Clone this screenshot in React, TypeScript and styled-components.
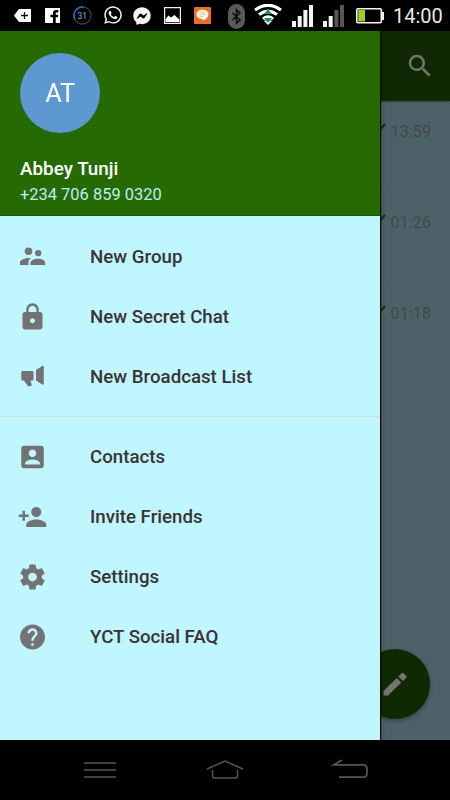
import React from "react";
import styled, { createGlobalStyle } from "styled-components";
import { MdLock, MdPersonAdd, MdHelp, MdSearch } from "react-icons/md";
import { FaWhatsapp, FaFacebookMessenger } from "react-icons/fa";

const GlobalStyle = createGlobalStyle`
  * { box-sizing: border-box; }
  body { margin: 0; background: #000; font-family: Roboto, "Noto Sans", sans-serif; }
  svg { display: block; flex: none; }
`;

const Phone = styled.div`
  width: 450px;
  height: 800px;
  display: flex;
  flex-direction: column;
  overflow: hidden;
  background: #000;
`;

const StatusBar = styled.header`
  height: 31px;
  flex: none;
  display: flex;
  align-items: flex-start;
`;

const StatusIcon = styled.span<{ $left: number; $top: number }>`
  flex: none;
  margin-left: ${(p) => p.$left}px;
  margin-top: ${(p) => p.$top}px;
  color: #f4f4f4;
`;

const Clock = styled.time`
  margin: 4px 0 0 9px;
  color: #e9e9e9;
  font-size: 20px;
  line-height: 25px;
  white-space: nowrap;
`;

const Screen = styled.main`
  flex: 1;
  position: relative;
  overflow: hidden;
  background: #4d6268;
`;

const Toolbar = styled.div`
  height: 70px;
  display: flex;
  align-items: center;
  justify-content: flex-end;
  padding-right: 15px;
  background: #0f2a02;
  color: #757575;
  box-shadow: 0 1px 2px rgba(0, 0, 0, 0.35);
`;

const ChatRow = styled.div<{ $line: boolean }>`
  height: 91px;
  display: flex;
  align-items: flex-start;
  justify-content: flex-end;
  gap: 5px;
  padding: 21px 19px 0 0;
  border-bottom: 1px solid ${(p) => (p.$line ? "#5a6063" : "transparent")};
  color: #434849;
  font-size: 16px;
  line-height: 20px;
  letter-spacing: 0.12px;
`;

const ComposeButton = styled.div`
  position: absolute;
  left: 360px;
  top: 618px;
  width: 70px;
  height: 70px;
  border-radius: 50%;
  display: flex;
  align-items: center;
  justify-content: center;
  background: #0f2a02;
  box-shadow: 0 2px 4px rgba(0, 0, 0, 0.35);
`;

const Drawer = styled.aside`
  position: absolute;
  inset: 0 auto 0 0;
  width: 380px;
  background: #bff6ff;
  box-shadow: 1px 0 1px rgba(0, 0, 0, 0.9), 2px 0 5px rgba(0, 0, 0, 0.2);
`;

const Profile = styled.div`
  height: 185px;
  padding: 22px 20px 0;
  background: #256a03;
  border-bottom: 1px solid #1b5900;
`;

const Avatar = styled.div`
  width: 80px;
  height: 80px;
  border-radius: 50%;
  display: flex;
  align-items: center;
  justify-content: center;
  background: #5d98d0;
  color: #fff;
  font-size: 25px;
`;

const ProfileName = styled.div`
  margin-top: 24px;
  color: #fff;
  font-size: 18.85px;
  font-weight: 500;
  line-height: 25px;
`;

const ProfilePhone = styled.div`
  color: #bdeef5;
  font-size: 16.45px;
  line-height: 26px;
`;

const MenuSection = styled.nav`
  padding: 11px 0 9px;
  & + & {
    padding-top: 10px;
    border-top: 1px solid #d3dcdd;
  }
`;

const MenuItem = styled.div`
  height: 60px;
  display: flex;
  align-items: center;
  gap: 42px;
  padding-left: 18px;
  color: #737373;
`;

const IconSlot = styled.span`
  flex: none;
  transform: translateX(-0.5px);
`;

const MenuLabel = styled.span`
  color: #3b3232;
  font-size: 18.7px;
  font-weight: 500;
  line-height: 24px;
`;

const NavBar = styled.footer`
  height: 60px;
  flex: none;
  display: flex;
  justify-content: space-between;
  align-items: center;
  padding: 0 81px;
`;

const GroupIcon = () => (
  <svg width="30" height="30" viewBox="0 0 30 30" fill="currentColor">
    <circle cx="11" cy="9.300" r="3.800" />
    <circle cx="20.700" cy="11.100" r="3.200" />
    <path d="M2.500 23v-2.500c0-3 5.500-4.600 8.700-4.600l2.500.2c-2 1.100-2.800 2.700-2.800 4.400V23ZM13 23v-2.500c0-2.500 4.500-3.800 7.700-3.800s6.900 1.300 6.900 3.800V23Z" />
  </svg>
);

const MegaphoneIcon = () => (
  <svg width="30" height="30" viewBox="0 0 30 30" fill="currentColor">
    <path d="M4.800 9H15q1 0 1 1v7.500q0 1-1 1h-2l1.400 4.800q-1.800 1.600-3.800 1l-4.200-5.800H4.800q-1 0-1-1V10q0-1 1-1ZM18.500 8l6.300-4.100q1.500-.6 1.500.8V21.500q0 1.600-1.500 1l-6.300-4Z" />
  </svg>
);

const AccountIcon = () => (
  <svg width="30" height="30" viewBox="0 0 24 24" fill="currentColor">
    <path d="M3 5v14c0 1.100.89 2 2 2h14c1.100 0 2-.9 2-2V5c0-1.100-.9-2-2-2H5c-1.110 0-2 .9-2 2zm12 4c0 1.660-1.340 3-3 3s-3-1.340-3-3 1.340-3 3-3 3 1.340 3 3zm-9 8c0-2 4-3.100 6-3.100s6 1.100 6 3.100v1H6v-1z" />
  </svg>
);

const GearIcon = () => (
  <svg width="30" height="30" viewBox="0 0 24 24" fill="currentColor">
    <path d="M19.43 12.98c.04-.32.07-.64.07-.98s-.03-.66-.07-.98l2.11-1.65c.19-.15.24-.42.12-.64l-2-3.46c-.12-.22-.39-.3-.61-.22l-2.49 1c-.52-.4-1.08-.73-1.69-.98l-.38-2.65C14.46 2.18 14.25 2 14 2h-4c-.25 0-.46.18-.49.42l-.38 2.65c-.61.25-1.17.59-1.69.98l-2.49-1c-.23-.09-.49 0-.61.22l-2 3.46c-.13.22-.07.49.12.64l2.11 1.65c-.04.32-.07.65-.07.98s.03.66.07.98l-2.11 1.65c-.19.15-.24.42-.12.64l2 3.46c.12.22.39.3.61.22l2.49-1c.52.4 1.08.73 1.69.98l.38 2.65c.03.24.24.42.49.42h4c.25 0 .46-.18.49-.42l.38-2.65c.61-.25 1.17-.59 1.69-.98l2.49 1c.23.09.49 0 .61-.22l2-3.46c.12-.22.07-.49-.12-.64l-2.11-1.65zM12 15.5c-1.93 0-3.5-1.57-3.5-3.5s1.57-3.5 3.5-3.5 3.5 1.57 3.5 3.5-1.57 3.5-3.5 3.5z" />
  </svg>
);

const SignalIcon = ({ faded = false }: { faded?: boolean }) => (
  <svg width="21" height="22" fill="#f4f4f4">
    <path d="M0 16h4v6H0zM5.700 11h4v11h-4z" />
    <path fill={faded ? "#565656" : "#f4f4f4"} d="M11.400 5h4v17h-4zM17 0h4v22h-4z" />
  </svg>
);

const PencilIcon = () => (
  <svg width="30" height="30" fill="#757575">
    <path d="M3.500 26.500V22L16.800 9l4.500 4.500L8 26.500ZM18.300 7.500l3.400-3.300q1-.9 1.900 0l2.700 2.700q.9.900 0 1.800L23 12Z" />
  </svg>
);

const CheckIcon = () => (
  <svg width="12" height="12" fill="none" stroke="#0b3b00" strokeWidth="2.200">
    <path d="m1 7 3 3 7-8" />
  </svg>
);

const groups = [
  [
    { label: "New Group", icon: <GroupIcon /> },
    { label: "New Secret Chat", icon: <MdLock size={30} /> },
    { label: "New Broadcast List", icon: <MegaphoneIcon /> },
  ],
  [
    { label: "Contacts", icon: <AccountIcon /> },
    { label: "Invite Friends", icon: <MdPersonAdd size={30} /> },
    { label: "Settings", icon: <GearIcon /> },
    { label: "YCT Social FAQ", icon: <MdHelp size={30} /> },
  ],
];

const Status = () => (
  <StatusBar>
    <StatusIcon $left={14} $top={8}>
      <svg width="17" height="15">
        <path d="M5 1h12v13H5L0 7.500Z" fill="#fff" />
        <path d="M7 7.500h7M10.500 4v7" stroke="#111" strokeWidth="1.300" />
      </svg>
    </StatusIcon>
    <StatusIcon $left={14} $top={8}>
      <svg width="15" height="15">
        <path d="M0 0h15v15H0z" fill="#fff" />
        <path d="M8 15V9.300H5.500V6.700H8V5q0-3 3-3h2.300v2.400h-1.500q-1.100 0-1.100 1v1.300h2.600l-.4 2.600h-2.200V15Z" fill="#000" />
      </svg>
    </StatusIcon>
    <StatusIcon $left={13} $top={6}>
      <svg width="19" height="19" fill="none">
        <circle cx="9.500" cy="9.500" r="8.600" stroke="#444" strokeWidth="1.200" />
        <path d="M2 13.500A8.600 8.600 0 0 1 10.500 1" stroke="#356bd2" strokeWidth="1.400" />
        <text x="9.300" y="12.600" textAnchor="middle" fill="#86aee0" fontFamily="Roboto" fontSize="8.500">31</text>
      </svg>
    </StatusIcon>
    <StatusIcon $left={10.5} $top={5}><FaWhatsapp size={20} /></StatusIcon>
    <StatusIcon $left={10.5} $top={7}><FaFacebookMessenger size={18} /></StatusIcon>
    <StatusIcon $left={13} $top={7}>
      <svg width="17" height="17">
        <path d="M.6.6h15.800v15.800H.6z" fill="none" stroke="#eee" strokeWidth="1.200" />
        <path d="M1.500 15v-3l3-3.500L7 10.500 10.500 8l2.500 2.500 2.500 2V15Z" fill="#fff" />
      </svg>
    </StatusIcon>
    <StatusIcon $left={13} $top={7}>
      <svg width="17" height="17">
        <rect width="17" height="17" rx="1" fill="#e57327" />
        <path d="M8.500 2.800c3.600 0 6 2 6 4.700 0 2.600-2.200 4.700-5.700 6.300v-1.700C5 12.200 2.500 10.200 2.500 7.500c0-2.700 2.400-4.700 6-4.700Z" fill="#fff2df" />
        <path d="M5.500 5.700h6M5.500 7.600h6M5.500 9.500h4" stroke="#efbd94" strokeWidth=".7" />
      </svg>
    </StatusIcon>
    <StatusIcon $left={17} $top={4}>
      <svg width="17" height="25" fill="none">
        <rect width="17" height="25" rx="8.500" fill="#595959" />
        <path d="m4.500 9 7.500 7-3.500 3.200V5.800L12 9l-7.500 7" stroke="#0b0b0b" strokeWidth="1.500" />
      </svg>
    </StatusIcon>
    <StatusIcon $left={9} $top={4}>
      <svg width="28" height="22" fill="none">
        <path d="M1 6Q14-3.500 27 6M5 10.500q9-6.500 18 0M9 15q5-4 10 0" stroke="#fff" strokeWidth="3.200" />
        <path d="m14 21-4-4q4-3 8 0Z" fill="#fff" />
        <path d="m14 5 4 5h-8ZM14 19l-4-5h8Z" fill="#149570" />
      </svg>
    </StatusIcon>
    <StatusIcon $left={10} $top={5}><SignalIcon /></StatusIcon>
    <StatusIcon $left={10} $top={5}><SignalIcon faded /></StatusIcon>
    <StatusIcon $left={12} $top={8}>
      <svg width="28" height="16">
        <rect x=".8" y=".8" width="24.500" height="14" rx="1" fill="none" stroke="#f4f4f4" strokeWidth="1.600" />
        <path d="M26 4h2v8h-2z" fill="#eee" />
        <path d="M2.200 2H9v11.500H2.200z" fill="#98cf22" />
      </svg>
    </StatusIcon>
    <Clock>14:00</Clock>
  </StatusBar>
);

export default function App() {
  return (
    <Phone>
      <GlobalStyle />
      <Status />
      <Screen>
        <Toolbar><MdSearch size={30} /></Toolbar>
        {["13:59", "01:26", "01:18"].map((time, i) => (
          <ChatRow key={time} $line={i < 2}><CheckIcon /><span>{time}</span></ChatRow>
        ))}
        <ComposeButton><PencilIcon /></ComposeButton>
        <Drawer>
          <Profile>
            <Avatar>AT</Avatar>
            <ProfileName>Abbey Tunji</ProfileName>
            <ProfilePhone>+234 706 859 0320</ProfilePhone>
          </Profile>
          {groups.map((items, i) => (
            <MenuSection key={i}>
              {items.map(({ label, icon }) => (
                <MenuItem key={label}><IconSlot>{icon}</IconSlot><MenuLabel>{label}</MenuLabel></MenuItem>
              ))}
            </MenuSection>
          ))}
        </Drawer>
      </Screen>
      <NavBar>
        <svg width="38" height="24" fill="none" stroke="#555" strokeWidth="1.700">
          <path d="M3 5h32M3 12h32M3 19h32" />
        </svg>
        <svg width="38" height="24" fill="none" stroke="#555" strokeWidth="1.500">
          <path d="M1 11 19 3l18 8M6.500 12v6q0 2 2 2h21q2 0 2-2v-6" />
        </svg>
        <svg width="38" height="24" fill="none" stroke="#555" strokeWidth="1.800">
          <path d="M11 2 3 6.800h29q4 0 4 4v4.400q0 4-4 4H8" />
        </svg>
      </NavBar>
    </Phone>
  );
}
